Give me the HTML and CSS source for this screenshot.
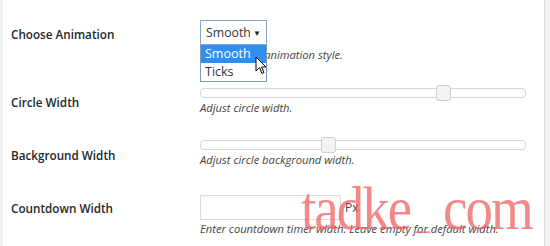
FILE: index.html
```html
<!DOCTYPE html>
<html>
<head>
<meta charset="utf-8">
<link rel="stylesheet" href="styles.css">
</head>
<body>
<div class="page">
  <div class="form">
    <div class="row row-anim">
      <div class="label">Choose Animation</div>
      <div class="field">
        <div class="select-wrap">
          <div class="select"><span>Smooth</span><span class="arrow">&#9660;</span></div>
          <div class="dropdown">
            <div class="opt active">Smooth</div>
            <div class="opt">Ticks</div>
          </div>
          <svg class="cursor" width="12" height="19" viewBox="0 0 12 19"><path d="M1 1 L1 15 L4.5 11.5 L7 17.5 L9 16.6 L6.6 11 L11 11 Z" fill="#fff" stroke="#000" stroke-width="1" stroke-linejoin="round"/></svg>
        </div>
        <p class="desc">Choose your animation style.</p>
      </div>
    </div>
    <div class="row row-circle">
      <div class="label">Circle Width</div>
      <div class="field">
        <div class="range"><div class="track"></div><div class="thumb" style="left:236px"></div></div>
        <p class="desc">Adjust circle width.</p>
      </div>
    </div>
    <div class="row row-bg">
      <div class="label">Background Width</div>
      <div class="field">
        <div class="range"><div class="track"></div><div class="thumb" style="left:121px"></div></div>
        <p class="desc">Adjust circle background width.</p>
      </div>
    </div>
    <div class="row row-count">
      <div class="label">Countdown Width</div>
      <div class="field">
        <div class="input-line"><div class="input"></div><span class="unit">Px</span></div>
        <p class="desc">Enter countdown timer width. Leave empty for default width.</p>
      </div>
    </div>
  </div>
  <div class="watermark">tadke<span class="wm-dot">_</span>com</div>
</div>
</body>
</html>
```
FILE: styles.css
```css
html, body {
  margin: 0;
  padding: 0;
  background: #fff;
}
body {
  width: 550px;
  height: 246px;
  overflow: hidden;
  font-family: "Open Sans", "Noto Sans", sans-serif;
  color: #23282d;
}
.page {
  position: relative;
  width: 542px;
  height: 246px;
  border-left: 3px solid #f1f1f1;
  border-right: 5px solid #f1f1f1;
  box-shadow: inset -1px 0 0 #dcdcdc;
}
.form {
  padding-top: 20px;
}
.row {
  display: grid;
  grid-template-columns: 189px 330px;
  padding-left: 8px;
}
.label {
  font-size: 11.7px;
  font-weight: 600;
  line-height: 16px;
  color: #23282d;
}
.desc {
  margin: 0;
  font-size: 11.2px;
  font-style: italic;
  line-height: 14px;
  color: #444;
}
.row-anim .label { padding-top: 6px; }
.row-anim .desc { margin-top: 3px; }
.row-circle { margin-top: 23px; }
.row-circle .label { padding-top: 9px; }
.row-bg { margin-top: 22px; }
.row-bg .label { padding-top: 10px; }
.row-count { margin-top: 28px; }
.row-count .label { padding-top: 5px; }
.row-count .desc { margin-top: 2px; }

.select-wrap {
  position: relative;
  width: 67px;
}
.select {
  box-sizing: border-box;
  height: 25px;
  width: 67px;
  border: 1px solid #7fa8cc;
  display: flex;
  align-items: center;
  justify-content: space-between;
  padding: 0 5px 0 5px;
  font-size: 12.3px;
  color: #32373c;
  background: #fff;
}
.arrow {
  font-size: 8px;
  color: #222;
}
.dropdown {
  position: absolute;
  left: 0;
  top: 25px;
  width: 67px;
  box-sizing: border-box;
  border: 1px solid #7f9db9;
  border-top: none;
  background: #fff;
  z-index: 2;
}
.opt {
  height: 18px;
  line-height: 18px;
  padding-left: 4px;
  font-size: 12.5px;
  color: #32373c;
}
.opt.active {
  background: #2f8ef0;
  color: #fff;
}
.cursor {
  position: absolute;
  left: 55px;
  top: 36px;
  z-index: 3;
}

.range {
  position: relative;
  width: 326px;
  height: 16px;
  display: flex;
  align-items: center;
}
.track {
  box-sizing: border-box;
  width: 326px;
  height: 10px;
  border: 1px solid #d5d5d5;
  border-radius: 4px;
  background: #fff;
}
.thumb {
  position: absolute;
  top: 0;
  box-sizing: border-box;
  width: 15px;
  height: 16px;
  border: 1px solid #cfcfcf;
  border-radius: 3px;
  background: #f3f3f3;
}

.input-line {
  display: flex;
  align-items: center;
  gap: 4px;
}
.input {
  box-sizing: border-box;
  width: 141px;
  height: 25px;
  border: 1px solid #ddd;
  background: #fff;
  box-shadow: inset 0 1px 2px rgba(0,0,0,0.05);
}
.unit {
  font-size: 12px;
  color: #444;
}

.watermark {
  position: absolute;
  left: 298px;
  top: 181px;
  font-family: "Liberation Serif", serif;
  font-size: 55px;
  line-height: 60px;
  color: rgba(238, 90, 90, 0.72);
  letter-spacing: -2px;
  white-space: nowrap;
  z-index: 5;
  transform: scaleY(1.12);
  transform-origin: 0 48px;
}
.wm-dot {
  font-size: 28px;
  letter-spacing: 0;
  margin: 0 13px 0 6px;
}
```
